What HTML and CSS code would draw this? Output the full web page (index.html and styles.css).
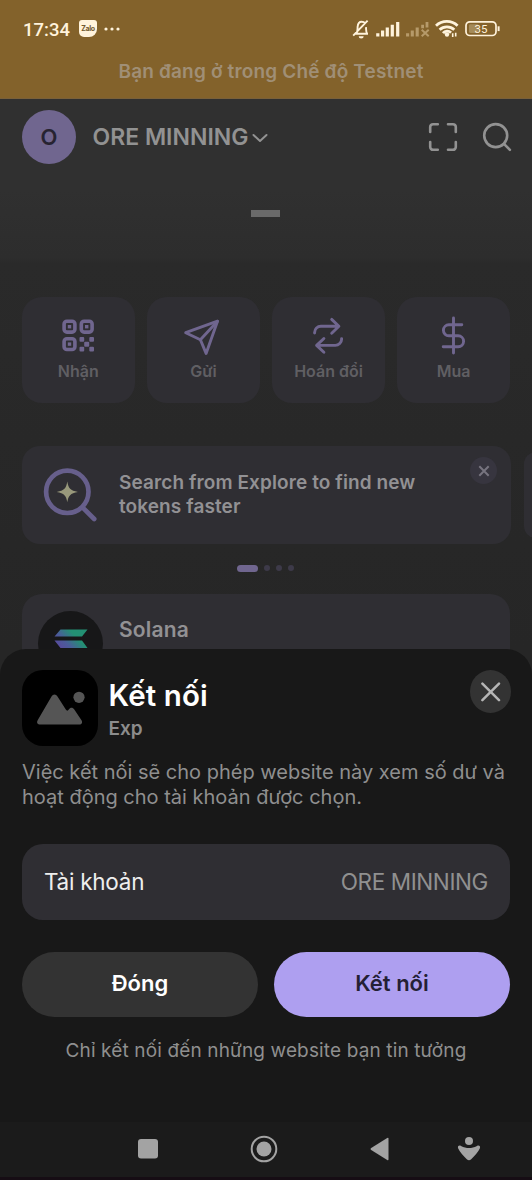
FILE: index.html
```html
<!DOCTYPE html>
<html lang="vi">
<head>
<meta charset="utf-8">
<title>Kết nối</title>
<link rel="stylesheet" href="styles.css">
</head>
<body>
<div class="screen">
  <div class="top">
    <div class="status">
      <span class="clock">17:34</span>
      <span class="zalo">Zalo</span>
      <svg class="more" width="16" height="4" viewBox="0 0 16 4" fill="#fff3dc"><circle cx="2" cy="2" r="1.6"/><circle cx="8" cy="2" r="1.6"/><circle cx="14" cy="2" r="1.6"/></svg>
      <svg class="status-icons" width="150" height="24" viewBox="350 17 150 24" fill="none" stroke="#fff3dc" stroke-width="1.9">
        <path d="M354.600 33.800h13.400M356.300 33.500c1.700-2 1.100-4.400 1.300-6.700c.3-3 1.800-5.100 4-5.100s3 .9 3.600 1.900M366 27.200c.2 2.500-.2 4.600 1.200 6.600M353.200 35.600L367.600 20.600"/>
        <path d="M358.700 36.200a2.500 2.200 0 0 0 5 0z" fill="#fff3dc" stroke="none"/>
        <path d="M377.8 33.200v3.200M382.600 30.400v6M387.300 27.500v8.900M392.300 24.800v11.600M397.700 22v14.400" stroke-width="3.200"/>
        <g stroke="#b69a6a"><path d="M407.600 33.200v3.200M412.300 30.400v6M417.200 27.500v8.900" stroke-width="3.100"/><path d="M422.600 24.800v3.400M427 22v5.600" stroke-width="2.800"/><path d="M421.700 29.700l7 6.600M428.700 29.700l-7 6.600" stroke-width="2"/></g>
        <path d="M436 25.700a15.800 15.800 0 0 1 21.600 0M439.600 29.800a10.700 10.700 0 0 1 14.700 0M443 33.100a5.400 5.400 0 0 1 8-.4" stroke-width="2.800"/>
        <circle cx="447" cy="34.500" r="2.200" fill="#fff3dc" stroke="none"/>
        <path d="M452.700 33.300v3.800M455.700 32.800v3.600" stroke-width="1.600"/>
        <rect x="466" y="21.800" width="30" height="13.700" rx="3.800" stroke-width="1.700"/>
        <rect x="469" y="24.300" width="9.600" height="8.800" rx="1.400" fill="#a58b59" stroke="none"/>
        <path d="M498.600 26.300v4.800" stroke-width="2"/>
        <text x="481" y="33" class="battery">35</text>
      </svg>
    </div>
    <div class="testnet"><span>Bạn đang ở trong Chế độ Testnet</span></div>
  </div>

  <div class="header">
    <div class="avatar">O</div>
    <div class="wallet">ORE MINNING</div>
    <svg class="chevron" width="16" height="10" viewBox="0 0 16 10"><path d="M1.500 2l6.500 6 6.500-6"/></svg>
    <svg class="tool scan" width="30" height="30" viewBox="0 0 30 30"><path d="M2.200 10V5a2.800 2.800 0 0 1 2.800-2.800h4.800M20 2.200h5A2.800 2.800 0 0 1 27.800 5v5M27.800 20v5a2.800 2.800 0 0 1-2.800 2.800h-5M9.800 27.800H5A2.800 2.800 0 0 1 2.200 25v-5"/></svg>
    <svg class="tool" width="30" height="30" viewBox="0 0 30 30"><circle cx="13.700" cy="13.600" r="11.500"/><path d="M21.900 21.800l6 6"/></svg>
  </div>

  <div class="balance"><span class="dash"></span></div>

  <div class="actions">
    <div class="action">
      <svg width="40" height="40" viewBox="0 0 40 40"><g stroke-width="3.600"><rect x="6.100" y="5.300" width="10.800" height="10.800" rx="2.800"/><rect x="23.300" y="5.300" width="10.800" height="10.800" rx="2.800"/><rect x="6.100" y="22.700" width="10.800" height="10.800" rx="2.800"/></g><g class="fill"><rect x="9.800" y="9" width="3.400" height="3.400"/><rect x="27" y="9" width="3.400" height="3.400"/><rect x="9.800" y="26.400" width="3.400" height="3.400"/><rect x="21.500" y="21" width="4.700" height="4.700" rx="1"/><rect x="31.300" y="21" width="4.700" height="4.700" rx="1"/><rect x="26.200" y="25.800" width="5" height="5" rx="1"/><rect x="21.500" y="30.800" width="4.700" height="4.700" rx="1"/><rect x="31.300" y="30.800" width="4.700" height="4.700" rx="1"/></g></svg>
      <span>Nhận</span>
    </div>
    <div class="action">
      <svg width="40" height="40" viewBox="0 0 40 40"><path d="M34.500 5.200L2.700 16.700l14.700 7L23.100 37.400z"/><path d="M34.500 5.200L17.400 23.700"/></svg>
      <span>Gửi</span>
    </div>
    <div class="action">
      <svg width="40" height="40" viewBox="0 0 40 40"><path d="M5.600 17v-.6a6.300 6.300 0 0 1 6.300-6.200h17.600M22.700 3.400l7.200 6.800-7.200 7M32.600 22.600v.6a6.300 6.300 0 0 1-6.300 6.200H8M14.900 22.500L7.600 29.400l7.300 6.900"/></svg>
      <span>Hoán đổi</span>
    </div>
    <div class="action">
      <svg width="40" height="40" viewBox="0 0 40 40"><path d="M19.500 2v35M27.800 8.800H14.900a5.400 5.400 0 0 0 0 11h9.200a5.500 5.500 0 0 1 0 11H9.200"/></svg>
      <span>Mua</span>
    </div>
  </div>

  <div class="promos">
    <div class="promo">
      <svg class="explore" width="56" height="58" viewBox="0 0 56 58"><circle cx="25.300" cy="25.800" r="21.200"/><path d="M40.500 41.300l11.700 11.700"/><path class="spark" d="M25.300 15.500c1.100 6.800 3 9.100 10.600 10.400c-7.600 1.300-9.500 3.600-10.600 10.400c-1.100-6.800-3-9.100-10.600-10.400c7.600-1.300 9.500-3.600 10.600-10.400z"/></svg>
      <p class="promo-text">Search from Explore to find new<br>tokens faster</p>
      <span class="dismiss"><svg width="12" height="12" viewBox="0 0 12 12"><path d="M1.300 1.300l9.400 9.400M10.700 1.300l-9.400 9.400"/></svg></span>
    </div>
    <div class="promo-next"></div>
  </div>
  <div class="pager"><i class="on"></i><i></i><i></i><i></i></div>

  <div class="token">
    <div class="token-logo">
      <svg width="36" height="34" viewBox="0 0 36 34"><defs><linearGradient id="sol" gradientUnits="userSpaceOnUse" x1="2" y1="28" x2="30" y2="2"><stop offset="0" stop-color="#6738a0"/><stop offset=".45" stop-color="#4b5c9a"/><stop offset=".75" stop-color="#239073"/><stop offset="1" stop-color="#239073"/></linearGradient></defs><path fill="url(#sol)" d="M7.500 1.500H34.500l-5.500 7H1.500zM1.500 12.500h27.500l5.500 7.500H7.500zM7.500 24H34.500l-5.500 7H1.500z"/></svg>
    </div>
    <span class="token-name">Solana</span>
  </div>

  <div class="sheet">
    <div class="sheet-head">
      <div class="site-icon"><svg width="76" height="76" viewBox="0 0 76 76"><circle cx="57" cy="27.300" r="5.600"/><path d="M18.500 54.500c-3.300 0-4.200-2.200-2.700-4.600L29.500 26.500c1.500-2.700 4.500-2.700 6 0l8.300 13c1 1.600 2 1.500 3 0 1.500-2.300 4-2.300 5.500.1l7.200 10.600c1.300 2.100.4 4.300-2.300 4.300z"/></svg></div>
      <div class="titles"><div class="title">Kết nối</div><div class="site">Exp</div></div>
      <span class="close"><svg width="20" height="20" viewBox="0 0 20 20"><path d="M1.400 1.600l16.600 16.600M18 1.600L1.400 18.200"/></svg></span>
    </div>
    <p class="desc">Việc kết nối sẽ cho phép website này xem số dư và<br>hoạt động cho tài khoản được chọn.</p>
    <div class="account"><span class="label">Tài khoản</span><span class="value">ORE MINNING</span></div>
    <div class="buttons"><div class="btn">Đóng</div><div class="btn primary">Kết nối</div></div>
    <div class="note"><span>Chỉ kết nối đến những website bạn tin tưởng</span></div>
    <div class="nav">
      <svg class="nav-recent" width="20" height="20" viewBox="0 0 20 20"><rect width="20" height="19.500" rx="3"/></svg>
      <svg class="nav-home" width="28" height="28" viewBox="0 0 28 28"><circle cx="14" cy="14" r="12.300" fill="none" stroke="#a3a3a3" stroke-width="2"/><circle cx="14" cy="14" r="7.500"/></svg>
      <svg class="nav-back" width="20" height="24" viewBox="0 0 20 24"><path d="M1.200 11L17.200 1.100q1.300-.7 1.300.7v20.400q0 1.400-1.300.7L1.200 13q-1.300-1 0-2z"/></svg>
      <svg class="nav-access" width="24" height="26" viewBox="0 0 24 26"><circle cx="12" cy="5" r="4"/><path d="M1.200 12.600c-1-2.300.8-3.800 2.800-2.700 5.500 2.700 10.500 2.700 16 0 2-1.100 3.800.4 2.800 2.700-1.400 3.300-5 7-8.600 10.600q-2.200 2-4.400 0C6.200 19.600 2.600 15.900 1.200 12.600z"/></svg>
    </div>
  </div>
</div>
</body>
</html>
```
FILE: styles.css
```css
* { box-sizing: border-box; }
body { margin: 0; font-family: Inter, "Noto Sans", sans-serif; background: #272727; }
svg { display: block; flex: none; }
p { margin: 0; }

.screen {
  position: relative;
  width: 532px;
  height: 1180px;
  overflow: hidden;
  background: linear-gradient(#303030 0, #303030 190px, #2d2d2d 257px, #2a2a2a 264px, #282828 440px, #262626 650px);
}

/* Status bar and network banner */
.top { height: 99px; background: #83622b; border-bottom: 1px solid #79603a; }
.status { display: flex; align-items: center; height: 58px; padding: 0 32px 0 23px; }
.clock { width: 47px; margin-top: 1px; font: 500 18.500px Roboto, sans-serif; color: #fff3dc; white-space: nowrap; }
.zalo {
  width: 18px; height: 17px; margin: -2px 7px 0 9px;
  border-radius: 3px 3px 8px 5px;
  background: #fff3dc; color: #6f572e;
  font-size: 7px; font-weight: 700; line-height: 17px; text-align: center; letter-spacing: -.4px;
}
.status-icons { margin-left: auto; }
.battery { font: 400 11.500px Roboto, sans-serif; fill: #fff3dc; stroke: none; text-anchor: middle; }
.testnet { display: flex; justify-content: center; margin-top: 2px; padding-left: 10px; font-size: 19px; font-weight: 600; line-height: 24px; letter-spacing: .17px; color: #a08f76; white-space: nowrap; }

/* Wallet header */
.header { display: flex; align-items: center; height: 77px; padding: 0 20px 2px 22px; }
.avatar { width: 54px; height: 54px; border-radius: 50%; background: #70668f; color: #272331; font-size: 22px; font-weight: 600; line-height: 54px; text-align: center; }
.wallet { width: 156px; margin-left: 16.500px; font-size: 23px; font-weight: 600; color: #929292; white-space: nowrap; }
.chevron { margin-left: 3.500px; margin-top: 2px; }
.chevron path, .tool { fill: none; stroke: #929292; stroke-width: 2; stroke-linecap: round; stroke-linejoin: round; }
.tool { stroke-width: 2.600; }
.scan { margin-left: auto; margin-right: 24px; }

.balance { display: flex; justify-content: center; align-items: center; height: 74px; }
.dash { width: 29px; height: 7px; margin-right: 1px; background: #6a6a6a; }

/* Quick actions */
.actions { display: grid; grid-template-columns: repeat(4, 1fr); gap: 12.500px; margin-top: 47px; padding: 0 22px; }
.action { display: flex; flex-direction: column; align-items: center; height: 106px; padding-top: 19px; border-radius: 20px; background: #2f2e33; }
.action svg { fill: none; stroke: #70668f; stroke-width: 2.900; stroke-linecap: round; stroke-linejoin: round; }
.action .fill { fill: #70668f; stroke: none; }
.action span { margin-top: 4px; font-size: 16px; font-weight: 600; line-height: 22px; color: #605f63; }

/* Promo carousel */
.promos { display: flex; align-items: center; gap: 13px; margin-top: 43px; padding-left: 22px; }
.promo { display: flex; flex: none; width: 489px; height: 98px; padding: 20px 14px 0 20px; border-radius: 18px; background: #2f2e33; }
.promo-next { flex: none; width: 40px; height: 86px; border-radius: 12px; background: #2f2e33; }
.explore { fill: none; stroke: #675f8c; stroke-width: 4.700; stroke-linecap: round; }
.explore .spark { fill: #98987b; stroke: none; }
.promo-text { margin: 5px 0 0 21px; font-size: 19px; font-weight: 600; line-height: 23.500px; letter-spacing: .1px; color: #929194; white-space: nowrap; }
.dismiss { display: flex; align-items: center; justify-content: center; width: 27px; height: 27px; margin: -9px 0 0 auto; border-radius: 50%; background: #37353f; }
.dismiss path { stroke: #77747f; stroke-width: 2; }
.pager { display: flex; align-items: center; justify-content: center; gap: 6px; height: 50px; padding: 0 1.500px 2px 0; }
.pager i { width: 6px; height: 6px; border-radius: 50%; background: #3d3a49; }
.pager .on { width: 21px; height: 7px; border-radius: 4px; background: #70668f; }

.token { display: flex; height: 98px; margin: 0 22px; padding: 17px 16px; border-radius: 20px; background: #2f2e33; }
.token-logo { display: flex; justify-content: center; width: 65px; height: 65px; padding-top: 17px; border-radius: 50%; background: #171718; }
.token-name { margin: 6px 0 0 16px; font-size: 21px; font-weight: 600; line-height: 26px; letter-spacing: .2px; color: #929194; }

/* Connection sheet */
.sheet { position: absolute; left: 0; right: 0; bottom: 0; height: 531px; padding-top: 21px; border-radius: 26px 26px 0 0; background: #181818; }
.sheet-head { display: flex; height: 76px; padding: 0 21px 0 22px; }
.site-icon { width: 76px; height: 76px; border-radius: 21px; background: #000; }
.site-icon svg { fill: #555; }
.titles { margin-left: 10.500px; }
.title { margin-top: 7px; font-size: 29.500px; font-weight: 600; line-height: 36px; letter-spacing: .1px; color: #fff; white-space: nowrap; }
.site { margin-top: 4px; font-size: 19px; font-weight: 600; line-height: 24px; color: #8c8c8c; }
.close { display: flex; align-items: center; justify-content: center; width: 41px; height: 43px; margin-left: auto; border-radius: 50%; background: #333; }
.close path { stroke: #b5b5b5; stroke-width: 2.500; stroke-linecap: round; }
.desc { margin: 14px 22px 0; font-size: 20px; line-height: 25px; color: #8f8f8f; white-space: nowrap; }
.account { display: flex; align-items: center; justify-content: space-between; height: 76px; margin: 34px 22px 0; padding: 0 22px 2px; border-radius: 21px; background: #2f2e33; font-size: 22.500px; }
.label { color: #eee; letter-spacing: -.27px; }
.value { color: #909090; letter-spacing: -.4px; }
.buttons { display: grid; grid-template-columns: 1fr 1fr; gap: 16px; margin: 32px 22px 0; }
.btn { height: 65px; border-radius: 33px; background: #333; color: #fff; font-size: 22px; font-weight: 600; line-height: 63px; text-align: center; }
.primary { background: #ae9ff0; color: #241f35; }
.note { display: flex; justify-content: center; height: 105px; padding-top: 20px; font-size: 19px; line-height: 28px; letter-spacing: .14px; color: #8f8f8f; white-space: nowrap; }
.nav { display: flex; align-items: center; height: 58px; padding-bottom: 1px; background: #1b1b1b; border-bottom: 3px solid #160d14; }
.nav svg { fill: #a3a3a3; }
.nav-recent { margin-left: 138px; }
.nav-home { margin-left: 92px; }
.nav-back { margin-left: 92px; }
.nav-access { margin-left: 67px; }
```
